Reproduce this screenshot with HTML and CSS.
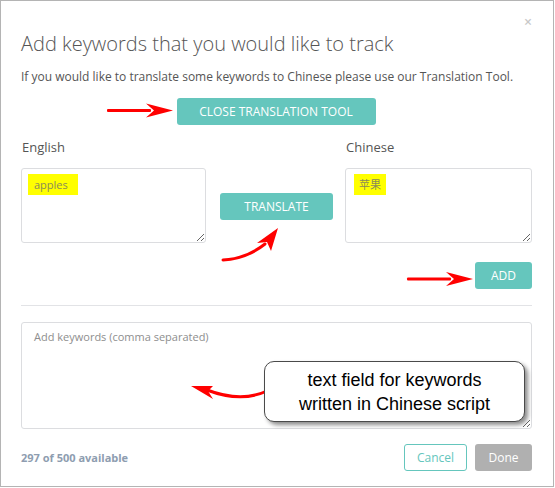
FILE: index.html
```html
<!DOCTYPE html>
<html>
<head>
<meta charset="utf-8">
<link rel="stylesheet" href="styles.css">
</head>
<body>
<div class="modal">
  <div class="top"><span class="close">&#215;</span></div>
  <h1 class="title">Add keywords that you would like to track</h1>
  <p class="intro">If you would like to translate some keywords to Chinese please use our Translation Tool.</p>
  <div class="center"><button class="btn btn-wide">CLOSE TRANSLATION TOOL</button></div>

  <div class="translate">
    <div class="col">
      <div class="label">English</div>
      <div class="field"><mark class="hl hl-en">apples</mark></div>
    </div>
    <div class="mid"><button class="btn btn-tr">TRANSLATE</button></div>
    <div class="col">
      <div class="label">Chinese</div>
      <div class="field"><mark class="hl hl-zh">苹果</mark></div>
    </div>
  </div>

  <div class="add-row"><button class="btn btn-add">ADD</button></div>
  <hr class="divider">
  <textarea class="keywords" placeholder="Add keywords (comma separated)"></textarea>

  <div class="footer">
    <span class="count">297 of 500 available</span>
    <div class="actions">
      <button class="btn-cancel">Cancel</button>
      <button class="btn-done">Done</button>
    </div>
  </div>

  <svg class="annot" width="554" height="487" viewBox="0 0 554 487">
    <g fill="#ff0000" stroke="none">
      <rect x="106" y="108" width="44" height="3" rx="1"/>
      <path d="M172,109.5 L145,102.5 L153,109.5 L145,116.5 Z"/>
      <rect x="406" y="276.5" width="44" height="3" rx="1"/>
      <path d="M472,278 L445,271 L453,278 L445,285 Z"/>
      <path d="M277,227 L270,250 L266,241 L256,242 Z"/>
      <path d="M190,385 L212,385 L207,390 L212,398 Z"/>
    </g>
    <g fill="none" stroke="#ff0000" stroke-width="3" stroke-linecap="round">
      <path d="M222,259 Q245,258 264,243"/>
      <path d="M266,390 Q240,402 206,389"/>
    </g>
  </svg>

  <div class="callout">text field for keywords<br>written in Chinese script</div>
</div>
</body>
</html>
```
FILE: styles.css
```css
* { box-sizing: border-box; }
html, body { margin: 0; padding: 0; background: #fff; }
body { font-family: "Open Sans", "Noto Sans CJK SC", sans-serif; color: #555; }

.modal {
  position: relative;
  width: 554px;
  height: 487px;
  border: 1px solid #b4b4b4;
  padding: 0 21px 0 20px;
  background: #fff;
}

.top { display: flex; justify-content: flex-end; height: 29px; padding-top: 14px; }
.close { color: #c8c8c8; font-size: 14px; line-height: 14px; margin-right: 0; font-weight: 600; }

.title { margin: 0; font-size: 20px; font-weight: 300; line-height: 28px; color: #555; }
.intro { margin: 10px 0 0; font-size: 12px; line-height: 18px; color: #555; }

.center { display: flex; justify-content: center; padding-right: 1px; margin-top: 12px; }

.btn {
  border: 0;
  background: #65c6bd;
  color: #fff;
  font-family: "Open Sans", sans-serif;
  font-size: 12px;
  border-radius: 3px;
  height: 27px;
  padding: 0;
}
.btn-wide { width: 199px; }
.btn-tr { width: 113px; }
.btn-add { width: 57px; }

.translate {
  display: grid;
  grid-template-columns: 185px 139px 187px;
  margin-top: 12px;
}
.label { font-size: 13px; line-height: 20px; color: #555; padding-left: 1px; }
.mid { display: flex; justify-content: center; align-items: flex-start; padding-top: 56px; padding-left: 2px; }
.field {
  margin-top: 11px;
  height: 75px;
  border: 1px solid #dcdde0;
  border-radius: 3px;
  padding: 3px 6px;
  resize: both;
  overflow: hidden;
}
.hl { background: #ffff00; color: #8a8a5a; font-size: 11px; line-height: 21px; display: inline-block; }
.hl-en { padding: 0 10px 0 6px; }
.hl-zh { padding: 0 5px 0 5px; margin-left: 2px; }

.add-row { display: flex; justify-content: flex-end; margin-top: 19px; }

.divider { border: 0; border-top: 1px solid #e2e3e6; margin: 16px 0 0; }

.keywords {
  display: block;
  width: 100%;
  height: 107px;
  margin-top: 16px;
  border: 1px solid #dcdde0;
  border-radius: 3px;
  padding: 6px 12px;
  font-family: "Open Sans", sans-serif;
  font-size: 11px;
  color: #555;
  resize: vertical;
}
.keywords::placeholder { color: #8e8e8e; }

.footer { display: flex; justify-content: space-between; align-items: center; margin-top: 15px; }
.count { font-size: 11px; font-weight: 700; color: #8e9db0; }
.actions { display: flex; gap: 8px; }
.btn-cancel, .btn-done {
  font-family: "Open Sans", sans-serif;
  font-size: 12px;
  height: 27px;
  border-radius: 3px;
  padding: 0;
}
.btn-cancel { width: 63px; background: #fff; border: 1px solid #65c6bd; color: #65c6bd; }
.btn-done { width: 57px; background: #b0b0b0; border: 0; color: #fff; }

.annot { position: absolute; left: 0; top: 0; pointer-events: none; }

.callout {
  position: absolute;
  left: 263px;
  top: 360px;
  width: 261px;
  height: 61px;
  border: 1px solid #4a4a4a;
  border-radius: 10px;
  background: #fff;
  box-shadow: 3px 3px 4px rgba(0,0,0,0.45);
  font-family: "Liberation Sans", Arial, sans-serif;
  font-size: 18px;
  line-height: 24px;
  color: #000;
  text-align: center;
  padding-top: 6px;
}
```
